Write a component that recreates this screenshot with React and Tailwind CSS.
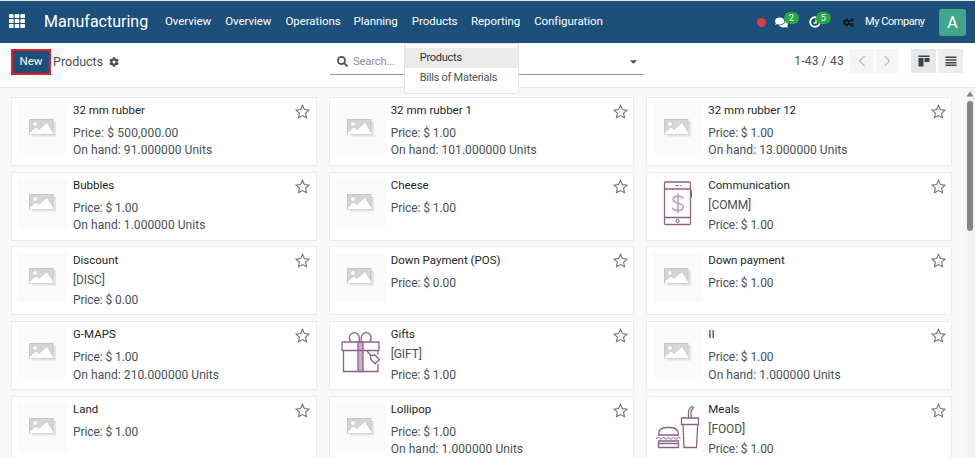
import React, { useState } from 'react';
import { FaTh, FaCog, FaCogs, FaComments, FaSearch, FaCaretDown } from 'react-icons/fa';

const menus = [
  { label: 'Overview', cls: 'w-[46px]' },
  { label: 'Overview', cls: 'w-[46px]' },
  { label: 'Operations', cls: 'w-[54px]' },
  { label: 'Planning', cls: 'w-[44px]' },
  { label: 'Products', cls: 'w-[45px]' },
  { label: 'Reporting', cls: 'w-[49px]' },
  { label: 'Configuration', cls: 'w-[67px]' },
];

const products = [
  { name: '32 mm rubber', price: '500,000.00', onHand: '91.000000' },
  { name: '32 mm rubber 1', price: '1.00', onHand: '101.000000' },
  { name: '32 mm rubber 12', price: '1.00', onHand: '13.000000' },
  { name: 'Bubbles', price: '1.00', onHand: '1.000000' },
  { name: 'Cheese', price: '1.00' },
  { name: 'Communication', code: 'COMM', price: '1.00', image: 'phone' },
  { name: 'Discount', code: 'DISC', price: '0.00' },
  { name: 'Down Payment (POS)', price: '0.00' },
  { name: 'Down payment', price: '1.00' },
  { name: 'G-MAPS', price: '1.00', onHand: '210.000000' },
  { name: 'Gifts', code: 'GIFT', price: '1.00', image: 'gift' },
  { name: 'II', price: '1.00', onHand: '1.000000' },
  { name: 'Land', price: '1.00' },
  { name: 'Lollipop', price: '1.00', onHand: '1.000000' },
  { name: 'Meals', code: 'FOOD', price: '1.00', image: 'meal' },
];

function Placeholder() {
  return (
    <svg viewBox="0 0 49 49" className="w-[49px] h-[49px] bg-[#fafafa]">
      <rect x="14" y="17.5" width="24" height="15" fill="#e3e3e5" />
      <rect x="11.5" y="15.5" width="23.5" height="14.5" fill="#d5d5d8" stroke="#c5c5ca" />
      <path d="M12 30v-2l6-5 3 2.5 8-7 6 9.5V30z" fill="#fff" />
      <path d="M12 28l6-5 3 2.5 8-7 6 9.5" fill="none" stroke="#c5c5ca" strokeWidth="0.7" />
      <circle cx="17" cy="20" r="2.3" fill="#fff" stroke="#c5c5ca" strokeWidth="0.6" />
    </svg>
  );
}

function PhoneImage() {
  return (
    <svg viewBox="0 0 49 49" className="w-[49px] h-[49px]" fill="none" stroke="#8e6288" strokeWidth="1.3">
      <rect x="11.5" y="3" width="26" height="42.5" rx="1" />
      <path d="M11.5 10h26M11.5 38.5h26M38.4 11.5v7" />
      <path d="M22 6.5h4M27 6.5h1.5" strokeWidth="0.9" />
      <circle cx="24.5" cy="42" r="1.6" strokeWidth="1" />
      <path d="M30 19.5c-1-2-3-2.4-5-2.4-2.8 0-4.8 1.3-4.8 3.5 0 5 10 2.3 10 7.4 0 2.3-2.2 3.6-5.2 3.6-2.6 0-4.8-.8-5.6-3M25 14.5v19.5" stroke="#c3a6c4" strokeWidth="1.8" />
    </svg>
  );
}

function GiftImage() {
  return (
    <svg viewBox="0 0 49 49" className="w-[49px] h-[49px]" fill="none" stroke="#8e6288" strokeWidth="1.3">
      <path d="M15 13.5a5 5 0 1 1 8.3-3.7V14M33.5 13.5a5 5 0 1 0-8.3-3.7V14" />
      <rect x="22" y="14" width="5" height="29.5" fill="#c9b0ca" />
      <rect x="6" y="14" width="37" height="8.5" rx="0.5" />
      <path d="M7.5 22.5v21h34.5V36M42 22.5v4M31 23l4 4.5" />
      <path d="M34.5 27.5l4.500-.5 4.300 4.800-4.300 4-4.300-4.600z" fill="#fff" />
    </svg>
  );
}

function MealImage() {
  return (
    <svg viewBox="0 0 49 49" className="w-[49px] h-[49px]" fill="none" stroke="#8e6288" strokeWidth="1.3">
      <path d="M5.5 32c0-5.500 4-7.500 8-7.500h4c4 0 8 2 8 7.500z" />
      <path d="M3 35.5l2.500-1.200 2.500 2 2.500-2 2.500 2 2.500-2 2.500 2 2.500-2 2.500 2 2.500-2 2 1.200" strokeWidth="1" />
      <path d="M5.5 38h20v6.500h-20zM5.500 40.500h20" />
      <path d="M28.5 15h17v6.500h-17zM30 21.500l1 23h12.500l1.200-23M35.500 15V9.500c0-2 1-4.500 3.500-6l1.500 1.300c-2 1.700-2.500 3-2.500 4.700V15" />
    </svg>
  );
}

function ProductImage({ image }) {
  if (image === 'phone') return <PhoneImage />;
  if (image === 'gift') return <GiftImage />;
  if (image === 'meal') return <MealImage />;
  return <Placeholder />;
}

function Star() {
  return (
    <svg viewBox="0 0 16 16" className="w-[15px] h-[15px]" fill="none" stroke="#6b7280" strokeWidth="1.15">
      <path d="M8 1.4l2 4.5 4.9.6-3.600 3.300 1 4.900L8 12.300l-4.300 2.400 1-4.900L1.100 6.500 6 5.900z" />
    </svg>
  );
}

function ProductCard({ product }) {
  const wide = product.price.length > 4;
  return (
    <div className="flex h-[69px] bg-white border border-[#e9ebee] pl-[6px] pr-[5.2px] pt-[6px]">
      <div className="w-[49px] shrink-0">
        <ProductImage image={product.image} />
      </div>
      <div className="flex-1 pl-[6px] text-[12px] leading-[17.3px] text-[#495057] whitespace-nowrap">
        <div className="-mt-[1.8px] text-[11.5px] tracking-[0px] text-[#1f2429]">{product.name}</div>
        {product.code && <div className="pt-[2.7px] tracking-[-0.1px]">[{product.code}]</div>}
        <div className={`${product.code ? 'pt-[3px]' : 'pt-[5.7px]'} ${wide ? 'tracking-[0.17px]' : 'tracking-[-0.08px]'}`}>
          Price: $ {product.price}
        </div>
        {product.onHand && <div className="tracking-[0.06px]">On hand: {product.onHand} Units</div>}
      </div>
      <Star />
    </div>
  );
}

export default function App() {
  const [open, setOpen] = useState(true);

  return (
    <div className="h-[458px] w-[975px] flex flex-col overflow-hidden bg-[#f8f9fb] font-[Roboto,sans-serif] text-[12px] tracking-[0.2px]">
      {/* Navbar */}
      <header className="h-[43px] shrink-0 flex items-center bg-[#1c507a] border-t border-[#dfe9dd] text-white pl-[9px] pr-[9px] whitespace-nowrap">
        <FaTh className="w-[16px] h-[16px] -mt-[2px]" />
        <span className="ml-[19px] w-[104px] text-[16px] tracking-[0px]">Manufacturing</span>
        <nav className="flex gap-[14.2px] ml-[17px] text-[11.5px] tracking-[-0.05px]">
          {menus.map((menu, i) => (
            <div key={i} className={`relative ${menu.cls}`}>
              <button onClick={() => menu.label === 'Products' && setOpen(!open)}>{menu.label}</button>
              {menu.label === 'Products' && open && (
                <div className="absolute z-10 left-[-8px] top-[30px] w-[115px] h-[51px] pt-[4px] bg-white border border-[#dfe2e6] rounded-b-[3px] text-[11px] text-[#495057] tracking-[-0.25px]">
                  <div className="h-[20px] leading-[20px] pl-[15px] bg-[#ebebeb] text-[#2b3035]">Products</div>
                  <div className="h-[19px] leading-[19px] pl-[15px]">Bills of Materials</div>
                </div>
              )}
            </div>
          ))}
        </nav>
        <div className="ml-auto flex items-center">
          <span className="w-[9px] h-[9px] rounded-full bg-[#dc3c3c]" />
          <span className="relative ml-[9px] w-[34px]">
            <FaComments className="w-[13px] h-[13px]" />
            <span className="absolute left-[9px] -top-[4px] w-[15px] h-[12px] rounded-full bg-[#28a745] text-[9px] leading-[12px] text-center">2</span>
          </span>
          <span className="relative w-[34px]">
            <svg viewBox="0 0 12 12" className="w-[12px] h-[12px]" fill="none" stroke="#fff">
              <circle cx="6" cy="6" r="4.8" strokeWidth="1.9" />
              <path d="M7 3.5V7H4.5" strokeWidth="1.3" />
            </svg>
            <span className="absolute left-[7px] -top-[4px] w-[15px] h-[12px] rounded-full bg-[#28a745] text-[9px] leading-[12px] text-center">5</span>
          </span>
          <FaCogs className="w-[11px] h-[11px] text-[#111]" />
          <span className="ml-[11px] w-[60px] text-[11px] tracking-[-0.45px]">My Company</span>
          <span className="ml-[14px] w-[27px] h-[27px] rounded-[3px] bg-[#43a58b] text-[16px] leading-[27px] text-center">A</span>
        </div>
      </header>

      {/* Control panel */}
      <div className="h-[45px] shrink-0 flex bg-white border-b border-[#e7e9ed] pl-[11px] pr-[12px] text-[#495057]">
        <button className="mt-[6px] w-[40px] h-[26px] bg-[#1c507a] border-2 border-[#ec1c24] text-white text-[11.5px] tracking-[0px]">New</button>
        <span className="ml-[2px] mt-[10px] w-[50px] leading-[18px] text-[12.5px] tracking-[0px]">Products</span>
        <FaCog className="ml-[5.5px] mt-[14px] w-[10px] h-[10px]" />
        <div className="ml-[211.5px] mt-[6px] w-[314px] h-[26px] flex items-center border-b border-[#7e9cbb]">
          <FaSearch className="ml-[7px] w-[11px] h-[11px]" />
          <span className="ml-[5px] text-[#8a9097] text-[11.5px] tracking-[-0.3px]">Search...</span>
          <FaCaretDown className="ml-auto mr-[5px] w-[11px] h-[11px]" />
        </div>
        <span className="ml-auto mr-[6px] mt-[10px] leading-[17px]">1-43 / 43</span>
        <div className="mt-[6px] flex h-[24px] gap-px">
          <span className="w-[24px] bg-[#f4f5f6] flex items-center justify-center">
            <svg viewBox="0 0 8 12" className="w-[8px] h-[12px]" fill="none" stroke="#8b9197"><path d="M6.5 1L1.5 6l5 5" /></svg>
          </span>
          <span className="w-[24px] bg-[#f4f5f6] flex items-center justify-center">
            <svg viewBox="0 0 8 12" className="w-[8px] h-[12px]" fill="none" stroke="#8b9197"><path d="M1.5 1l5 5-5 5" /></svg>
          </span>
        </div>
        <div className="ml-[12px] mt-[6px] flex h-[24px] gap-[2px]">
          <span className="w-[25px] bg-[#e6e7e8] flex items-center justify-center">
            <svg viewBox="0 0 12 12" className="w-[12px] h-[12px]" fill="#3d4247"><path d="M.5.5h11V2H.5zM.5 3h5v8.500h-5zM6.500 3h5v4h-5z" /></svg>
          </span>
          <span className="w-[25px] bg-[#ececed] flex items-center justify-center">
            <svg viewBox="0 0 12 12" className="w-[12px] h-[12px]" fill="#3d4247"><path d="M.5 1.5h11V3H.5zM.5 4.200h11v1.500H.5zM.5 6.900h11v1.500H.5zM.5 9.600h11v1.500H.5z" /></svg>
          </span>
        </div>
      </div>

      {/* Kanban */}
      <main className="flex-1 flex overflow-hidden">
        <div className="w-[941px] ml-[11px] mt-[9px] grid grid-cols-3 content-start gap-x-[12px] gap-y-[5.7px]">
          {products.map((p) => (
            <ProductCard key={p.name} product={p} />
          ))}
        </div>
        <div className="ml-auto w-[15px] flex flex-col items-center pl-[4px] bg-linear-to-r from-[#f8f9fb] to-[#efefef]">
          <svg viewBox="0 0 8 6" className="mt-[3px] w-[8px] h-[6px]" fill="#808080"><path d="M4 .5L7.5 5.5H.5z" /></svg>
          <div className="mt-[4px] w-[6px] h-[130px] rounded-full bg-[#858585]" />
        </div>
      </main>
    </div>
  );
}
